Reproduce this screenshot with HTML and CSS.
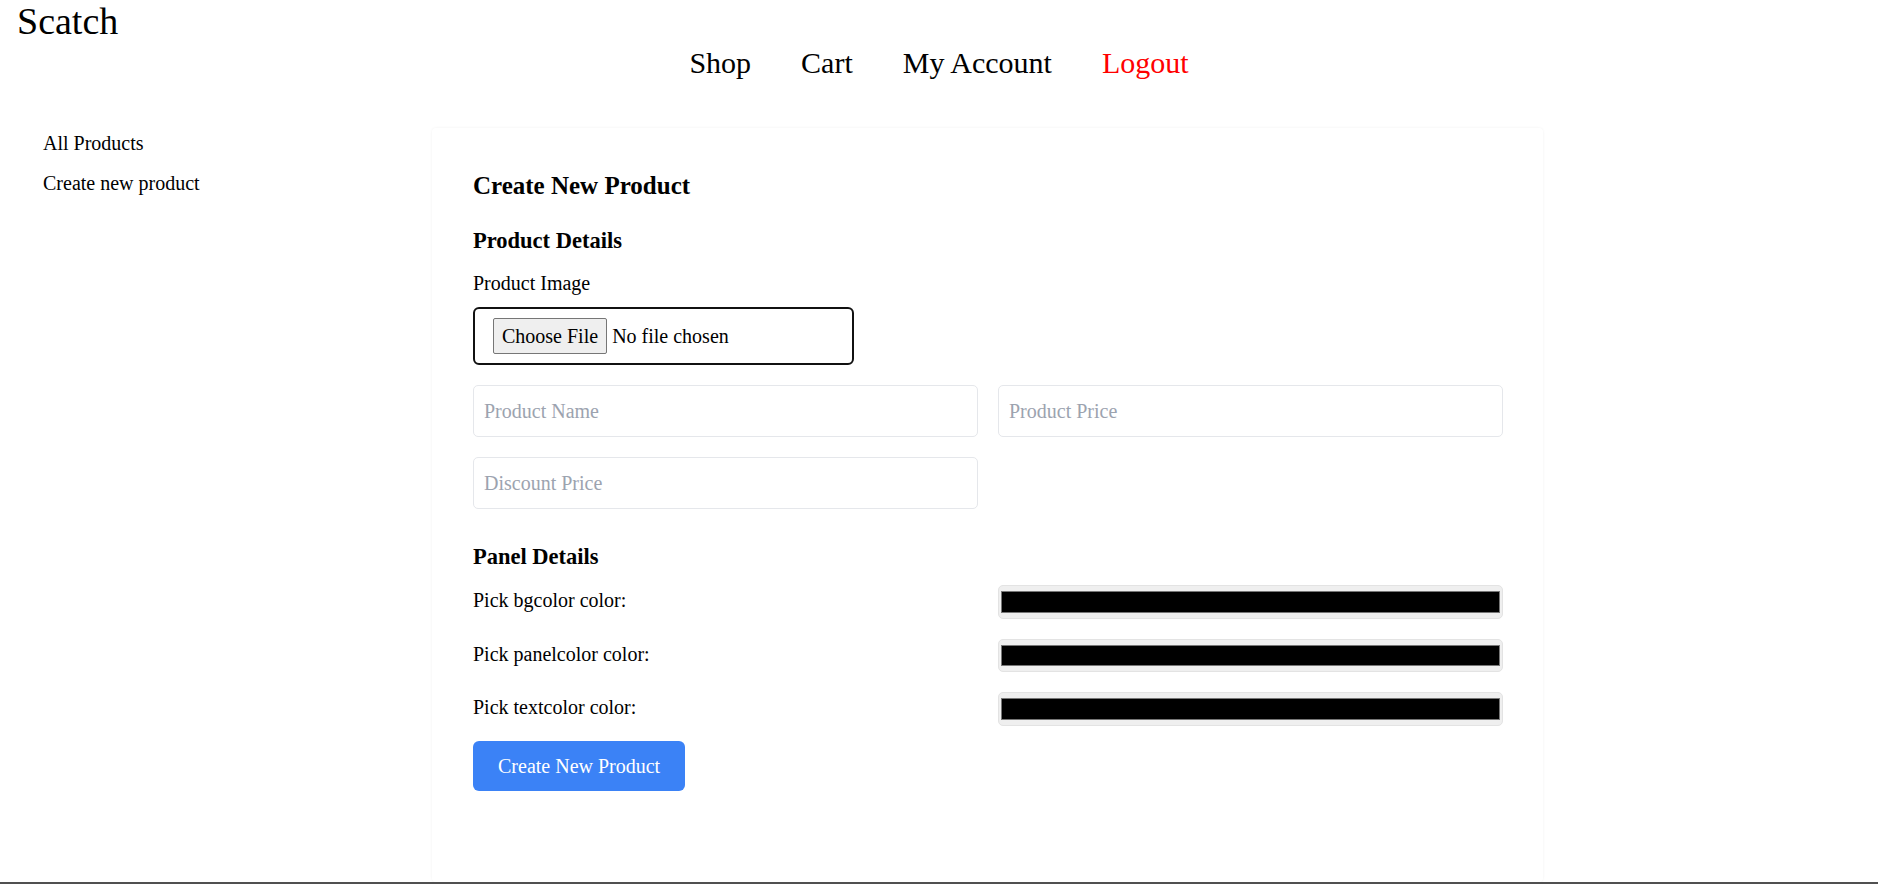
FILE: index.html
```html
<!DOCTYPE html>
<html lang="en">
<head>
<meta charset="utf-8">
<title>Scatch - Create New Product</title>
<link rel="stylesheet" href="styles.css">
</head>
<body>
<div class="page">
  <header class="topbar">
    <h1 class="brand">Scatch</h1>
    <nav class="nav">
      <a href="#" class="nav-link">Shop</a>
      <a href="#" class="nav-link">Cart</a>
      <a href="#" class="nav-link">My Account</a>
      <a href="#" class="nav-link logout">Logout</a>
    </nav>
  </header>
  <main class="layout">
    <aside class="sidebar">
      <a href="#" class="side-link">All Products</a>
      <a href="#" class="side-link">Create new product</a>
    </aside>
    <section class="card">
      <h2 class="card-title">Create New Product</h2>
      <form class="form">
        <h3 class="section-title">Product Details</h3>
        <label class="field-label" for="image">Product Image</label>
        <input id="image" class="file-input" type="file" name="image">
        <div class="input-grid">
          <input class="text-input" type="text" placeholder="Product Name">
          <input class="text-input" type="text" placeholder="Product Price">
          <input class="text-input" type="text" placeholder="Discount Price">
        </div>
        <h3 class="section-title panel-title">Panel Details</h3>
        <div class="color-grid">
          <label class="color-label" for="bg">Pick bgcolor color:</label>
          <input id="bg" class="color-input" type="color" value="#000000">
          <label class="color-label" for="panel">Pick panelcolor color:</label>
          <input id="panel" class="color-input" type="color" value="#000000">
          <label class="color-label" for="text">Pick textcolor color:</label>
          <input id="text" class="color-input" type="color" value="#000000">
        </div>
        <button type="button" class="submit">Create New Product</button>
      </form>
    </section>
  </main>
</div>
</body>
</html>
```

FILE: styles.css
```css
* {
  box-sizing: border-box;
}

html, body {
  margin: 0;
  padding: 0;
  background: #ffffff;
}

body {
  font-family: "Liberation Serif", "Times New Roman", serif;
  font-size: 20px;
  line-height: 30px;
  color: #000000;
}

.page {
  height: 100vh;
  display: flex;
  flex-direction: column;
  overflow: hidden;
  border-bottom: 2px solid #505050;
}

.topbar {
  display: flex;
  flex-direction: column;
}

.brand {
  margin: 0;
  padding: 1px 0 0 17px;
  font-size: 38px;
  line-height: 40px;
  font-weight: normal;
}

.nav {
  display: flex;
  justify-content: center;
  gap: 50px;
  margin-top: 2px;
}

.nav-link {
  font-size: 30px;
  line-height: 40px;
  color: #000000;
  text-decoration: none;
}

.nav-link.logout {
  color: #ff0000;
}

.layout {
  flex: 1;
  display: flex;
  align-items: stretch;
  padding: 45px 0 0 43px;
}

.sidebar {
  width: 389px;
  flex-shrink: 0;
  display: flex;
  flex-direction: column;
  gap: 10px;
}

.side-link {
  color: #000000;
  text-decoration: none;
}

.card {
  width: 1111px;
  flex-shrink: 0;
  padding: 40px 40px 0 41px;
  background: #ffffff;
  box-shadow: 0 0 3px rgba(0, 0, 0, 0.06);
  border-radius: 4px;
}

.card-title {
  margin: 0 0 20px 0;
  font-size: 25px;
  line-height: 35px;
  font-weight: bold;
}

.section-title {
  margin: 0 0 10px 0;
  font-size: 22.5px;
  line-height: 35px;
  font-weight: bold;
}

.panel-title {
  margin-top: 30px;
  margin-bottom: 11px;
}

.form {
  display: flex;
  flex-direction: column;
  align-items: flex-start;
}

.field-label {
  display: block;
  margin-bottom: 9px;
}

.file-input {
  width: 381px;
  height: 58px;
  padding: 9px 18px;
  border: 2px solid #111111;
  border-radius: 6px;
  font: inherit;
  font-size: 20px;
  line-height: 36px;
  color: #000000;
  background: #ffffff;
}

.file-input::file-selector-button {
  font: inherit;
  font-size: 20px;
  height: 36px;
  line-height: 30px;
  padding: 1px 8px;
  margin-right: 5px;
  border: 1px solid #767676;
  border-radius: 2px;
  background: #efefef;
  color: #000000;
}

.input-grid {
  width: 100%;
  margin-top: 20px;
  display: grid;
  grid-template-columns: 1fr 1fr;
  gap: 20px;
}

.text-input {
  height: 52px;
  width: 100%;
  padding: 0 10px;
  border: 1px solid #e5e7eb;
  border-radius: 5px;
  font: inherit;
  font-size: 20px;
  color: #000000;
  background: #ffffff;
  outline: none;
}

.text-input::placeholder {
  color: #9ca3af;
}

.color-grid {
  width: 100%;
  display: grid;
  grid-template-columns: 1fr 1fr;
  column-gap: 20px;
  row-gap: 20px;
}

.color-label {
  display: block;
}

.color-input {
  -webkit-appearance: none;
  appearance: none;
  width: 100%;
  height: 33.7px;
  padding: 0;
  border: 1px solid #e3e3e3;
  border-radius: 5px;
  background: #efefef;
  cursor: pointer;
}

.color-input::-webkit-color-swatch-wrapper {
  padding: 5px 2px;
}

.color-input::-webkit-color-swatch {
  border: 1px solid #777777;
  border-radius: 0;
}

.submit {
  margin-top: 15px;
  height: 50px;
  padding: 0 25px;
  border: 0;
  border-radius: 6px;
  background: #3b82f6;
  color: #ffffff;
  font: inherit;
  font-size: 20px;
  cursor: pointer;
}
```
